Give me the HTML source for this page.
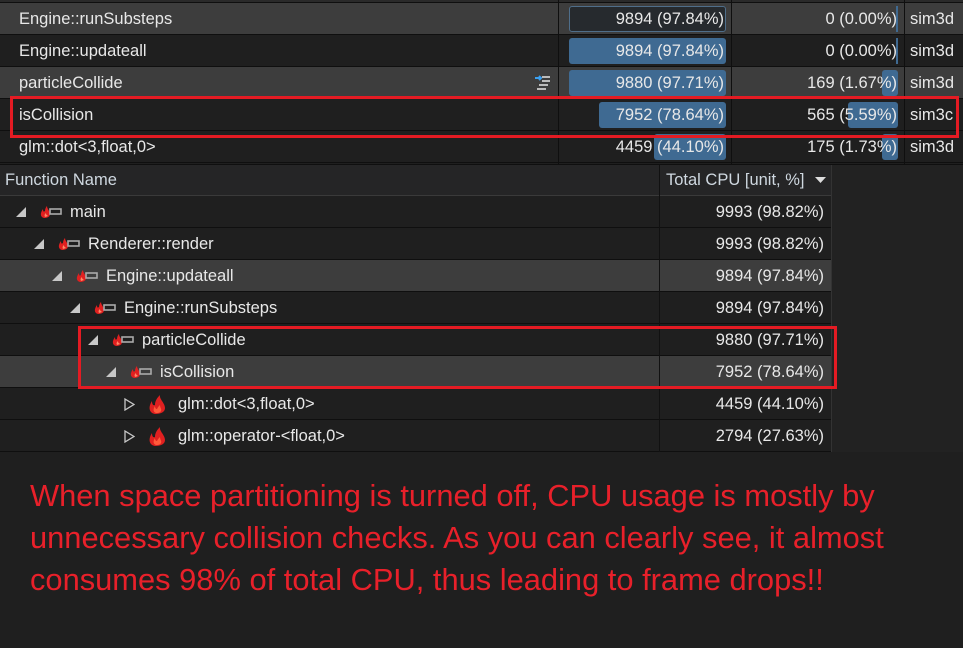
<!DOCTYPE html>
<html><head><meta charset="utf-8"><style>
*{margin:0;padding:0;box-sizing:border-box}
body{width:963px;height:648px;background:#1f1f1f;position:relative;overflow:hidden;font-family:"Liberation Sans",sans-serif;color:#e8e8e8;font-size:16.5px}
.a{position:absolute}
.row{position:absolute;left:0;height:32px;border-bottom:1px solid #0f0f0f}
.t{position:absolute;line-height:32px;white-space:nowrap}
.r{text-align:right}
.bar{position:absolute;background:#3f6a92;border-radius:3px;height:26px;top:3px}
.vl{position:absolute;width:1px;background:#0f0f0f}
.rb{position:absolute;border:3px solid #e41b23}
.ico{position:absolute;top:9px}
.tri{position:absolute;top:11px}
.msg{position:absolute;left:30px;color:#e8202a;font-size:31px;white-space:nowrap;transform-origin:0 0;transform:scaleX(0.995)}
</style></head><body>
<div class="a" style="left:0;top:0;width:963px;height:3px;background:#2a2a2a;border-bottom:1px solid #0f0f0f"></div>
<div class="row" style="top:3px;width:963px;background:#3d3d3d"></div>
<div class="row" style="top:35px;width:963px;background:#1f1f1f"></div>
<div class="row" style="top:67px;width:963px;background:#3d3d3d"></div>
<div class="row" style="top:99px;width:963px;background:#1f1f1f"></div>
<div class="row" style="top:131px;width:963px;background:#1f1f1f"></div>
<div class="vl" style="left:558px;top:0;height:164px"></div>
<div class="vl" style="left:731px;top:0;height:164px"></div>
<div class="vl" style="left:904px;top:0;height:164px"></div>
<div class="bar" style="left:569px;top:6px;width:157px;background:#262a2e;border:1px solid #4f6e8a"></div>
<div class="bar" style="left:569px;top:38px;width:157px"></div>
<div class="bar" style="left:569px;top:70px;width:157px"></div>
<div class="bar" style="left:599px;top:102px;width:127px"></div>
<div class="bar" style="left:654px;top:134px;width:72px"></div>
<div class="a" style="left:896px;top:6px;width:2px;height:26px;background:#3f6a92"></div>
<div class="a" style="left:896px;top:38px;width:2px;height:26px;background:#3f6a92"></div>
<div class="bar" style="left:882px;top:70px;width:16px"></div>
<div class="bar" style="left:848px;top:102px;width:50px"></div>
<div class="bar" style="left:882px;top:134px;width:16px"></div>
<div class="t" style="left:19px;top:3px">Engine::runSubsteps</div>
<div class="t" style="left:19px;top:35px">Engine::updateall</div>
<div class="t" style="left:19px;top:67px">particleCollide</div>
<div class="t" style="left:19px;top:99px">isCollision</div>
<div class="t" style="left:19px;top:131px">glm::dot&lt;3,float,0&gt;</div>
<div class="t r" style="left:560px;width:164px;top:3px">9894 (97.84%)</div>
<div class="t r" style="left:560px;width:164px;top:35px">9894 (97.84%)</div>
<div class="t r" style="left:560px;width:164px;top:67px">9880 (97.71%)</div>
<div class="t r" style="left:560px;width:164px;top:99px">7952 (78.64%)</div>
<div class="t r" style="left:560px;width:164px;top:131px">4459 (44.10%)</div>
<div class="t r" style="left:733px;width:164px;top:3px">0 (0.00%)</div>
<div class="t r" style="left:733px;width:164px;top:35px">0 (0.00%)</div>
<div class="t r" style="left:733px;width:164px;top:67px">169 (1.67%)</div>
<div class="t r" style="left:733px;width:164px;top:99px">565 (5.59%)</div>
<div class="t r" style="left:733px;width:164px;top:131px">175 (1.73%)</div>
<div class="t" style="left:910px;top:3px">sim3d</div>
<div class="t" style="left:910px;top:35px">sim3d</div>
<div class="t" style="left:910px;top:67px">sim3d</div>
<div class="t" style="left:910px;top:99px">sim3c</div>
<div class="t" style="left:910px;top:131px">sim3d</div>
<svg class="a" style="left:534px;top:74px" width="18" height="18"><path d="M1 4h6M5 2l2 2-2 2" stroke="#3ba0f0" stroke-width="2" fill="none"/><rect x="8" y="2" width="8" height="2" fill="#bbb"/><rect x="8" y="6" width="8" height="2" fill="#bbb"/><rect x="5" y="10" width="9" height="2" fill="#bbb"/><rect x="3" y="14" width="9" height="2" fill="#bbb"/></svg>
<div class="rb" style="left:10px;top:96px;width:949px;height:42px"></div>

<div class="a" style="left:0;top:164px;width:963px;height:1px;background:#0f0f0f"></div>
<div class="a" style="left:831px;top:165px;width:132px;height:287px;background:#222"></div>
<div class="row" style="top:165px;width:832px;background:#252526;height:31px;border-bottom:1px solid #3a3a3a"></div>
<div class="t" style="left:5px;top:164px;color:#cfd8e0">Function Name</div>
<div class="t" style="left:666px;top:164px;color:#cfd8e0">Total CPU [unit, %]</div>
<svg class="a" style="left:815px;top:177px" width="12" height="8"><path d="M0 0h11L5.5 6z" fill="#ddd"/></svg>
<div id="rows"></div>
<div class="vl" style="left:659px;top:165px;height:287px;background:#111"></div>
<div class="vl" style="left:831px;top:165px;height:287px;background:#333"></div>
<div class="rb" style="left:78px;top:326px;width:759px;height:63px"></div>

<div class="msg" style="top:478px">When space partitioning is turned off, CPU usage is mostly by</div>
<div class="msg" style="top:520px">unnecessary collision checks. As you can clearly see, it almost</div>
<div class="msg" style="top:562px">consumes 98% of total CPU, thus leading to frame drops!!</div>
<script>
var d=[["main",0,"9993 (98.82%)",0,1],["Renderer::render",1,"9993 (98.82%)",0,1],["Engine::updateall",2,"9894 (97.84%)",1,1],["Engine::runSubsteps",3,"9894 (97.84%)",0,1],["particleCollide",4,"9880 (97.71%)",0,1],["isCollision",5,"7952 (78.64%)",1,1],["glm::dot<3,float,0>",6,"4459 (44.10%)",0,0],["glm::operator-<float,0>",6,"2794 (27.63%)",0,0]];
var h="";
d.forEach(function(r,i){var y=196+i*32,x=16+r[1]*18;
h+='<div class="row" style="top:'+y+'px;width:832px;background:'+(r[3]?'#3d3d3d':'#1f1f1f')+'"></div>';
if(r[4]){h+='<svg class="tri" style="left:'+x+'px;top:'+(y+11)+'px" width="11" height="11"><path d="M10 0V10H0z" fill="#c8c8c8"/></svg>';
h+='<svg class="ico" style="left:'+(x+24)+'px;top:'+(y+9)+'px" width="22" height="14"><path d="M4 13C0 12 0 8 3 4c0 3 1 3 2 2 0-2 1-4 2-5 0 3 3 5 3 8s-3 4-6 4z" fill="#e02020"/><path d="M5 12c-1-2 0-3 1-4 0 2 1 2 2 3z" fill="#f86"/><rect x="10" y="4" width="11" height="5" fill="none" stroke="#aaa" stroke-width="1.6"/></svg>';}
else{h+='<svg class="tri" style="left:'+x+'px;top:'+(y+10)+'px" width="11" height="13"><path d="M1 1L10 6.5 1 12z" fill="none" stroke="#c8c8c8" stroke-width="1.3"/></svg>';
h+='<svg class="ico" style="left:'+(x+24)+'px;top:'+(y+7)+'px" width="18" height="20"><path d="M7 19C1 18 0 12 4 6c0 3 1 5 3 4 0-4 2-7 5-10-1 4 5 8 5 13 0 4-4 6-10 6z" fill="#e02020"/><path d="M8 18c-3-1-3-4-1-7 0 2 1 3 2 3 1-2 2-3 3-4 0 3 2 4 1 6s-3 2-5 2z" fill="#ff5a3a"/></svg>';}
h+='<div class="t" style="left:'+(x+54)+'px;top:'+y+'px"></div>';
h+='<div class="t r" style="left:660px;width:164px;top:'+y+'px">'+r[2]+'</div>';});
document.getElementById("rows").innerHTML=h;
var ts=document.querySelectorAll("#rows .t:not(.r)");d.forEach(function(r,i){ts[i].textContent=r[0];});
</script>
</body></html>
